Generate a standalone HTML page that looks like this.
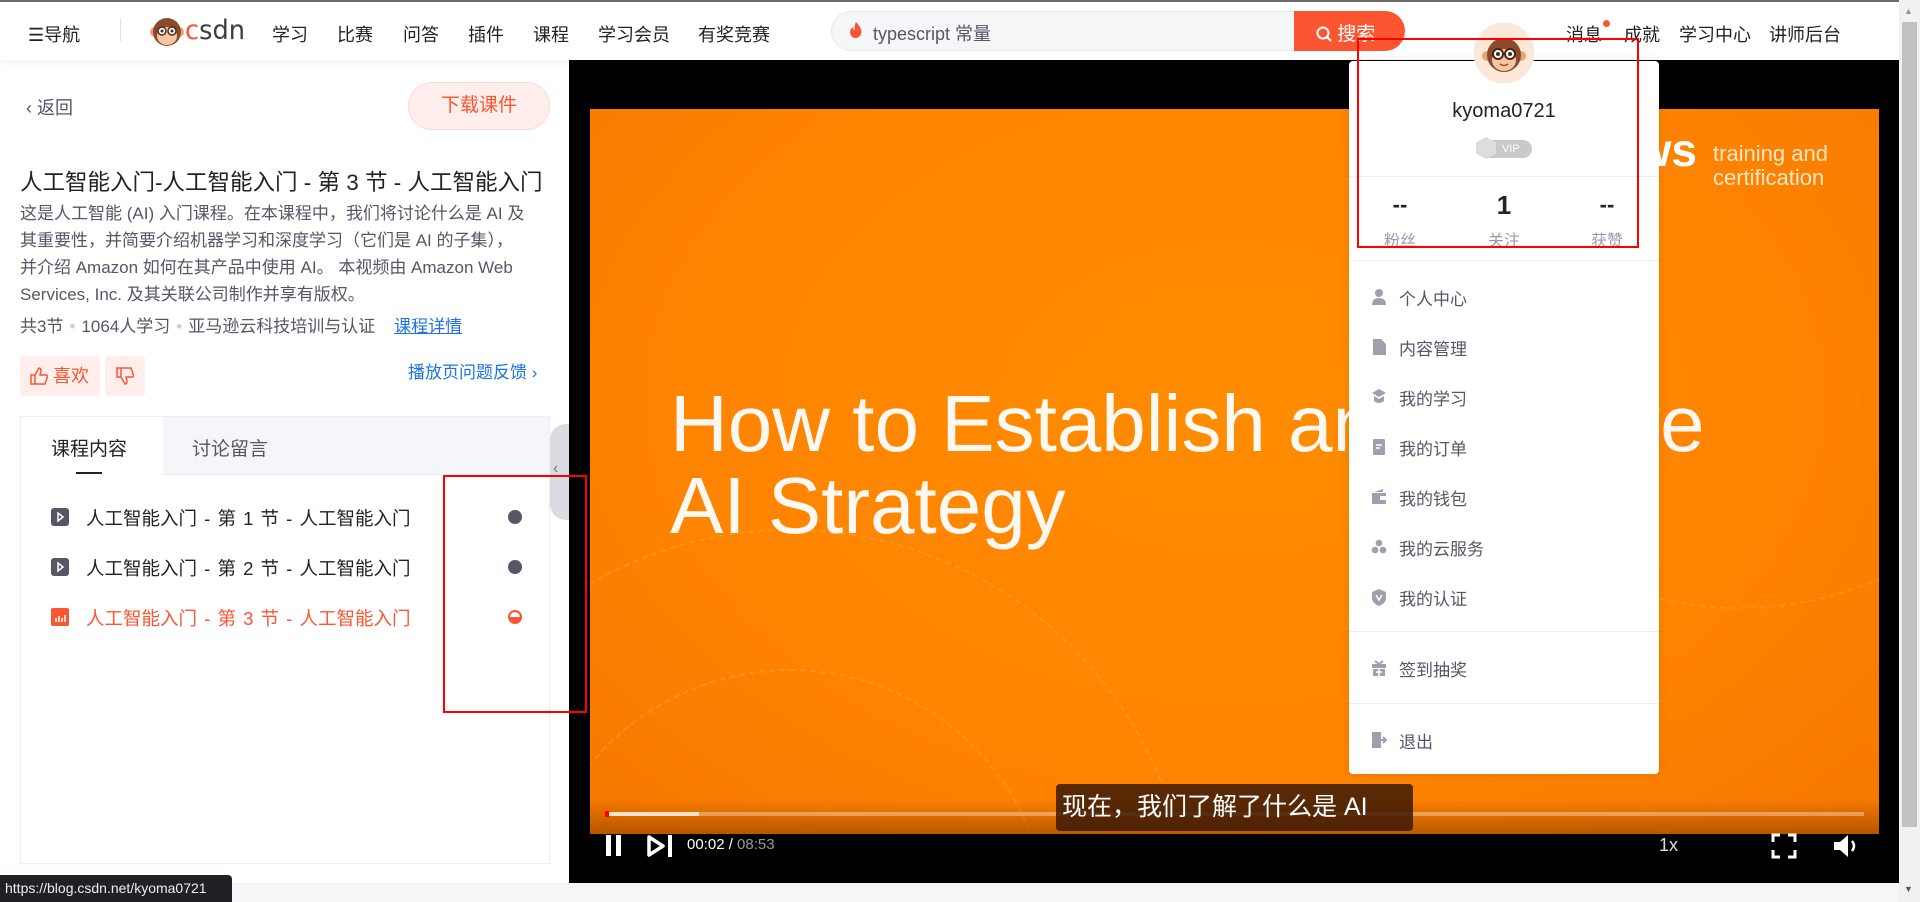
<!DOCTYPE html>
<html><head><meta charset="utf-8"><style>
*{margin:0;padding:0;box-sizing:border-box}
html,body{width:1920px;height:902px;overflow:hidden}
body{background:#fff;font-family:"Liberation Sans","Noto Sans CJK SC",sans-serif;color:#222226;position:relative}
.a{position:absolute;white-space:nowrap}
.hdr{position:absolute;left:0;top:0;width:1899px;height:60px;background:#fff;border-top:2px solid #6b6b6b;box-shadow:0 2px 6px rgba(0,0,0,.06)}
.nav{font-size:18px;color:#222226;top:19px}
.menu{font-size:17px;color:#555666}
.li{font-size:18.5px;word-spacing:2px}
.dot{color:#ccc;margin:0 6px}
</style></head><body>
<div class="hdr">
 <div class="a nav" style="left:28px">☰导航</div>
 <div class="a" style="left:120px;top:16px;width:1px;height:24px;background:#e0e0e0"></div>
 <svg class="a" style="left:150px;top:14px" width="34" height="32" viewBox="0 0 34 32"><circle cx="5" cy="16" r="5" fill="#e6a27a"/><circle cx="29" cy="16" r="5" fill="#e6a27a"/><circle cx="17" cy="16" r="14" fill="#8b4a2b"/><ellipse cx="17" cy="20" rx="10" ry="9" fill="#f4c7a0"/><circle cx="12" cy="15" r="4" fill="#fff" stroke="#5a2d16" stroke-width="1.5"/><circle cx="22" cy="15" r="4" fill="#fff" stroke="#5a2d16" stroke-width="1.5"/><circle cx="12" cy="15" r="1.5" fill="#333"/><circle cx="22" cy="15" r="1.5" fill="#333"/></svg>
 <div class="a" style="left:185px;top:13px;font-size:27px;font-family:'DejaVu Sans',sans-serif;transform:scaleX(.95);transform-origin:left"><span style="color:#fc5531">c</span><span style="color:#3d3d3d">sdn</span></div>
 <div class="a nav" style="left:272px">学习</div>
 <div class="a nav" style="left:337px">比赛</div>
 <div class="a nav" style="left:403px">问答</div>
 <div class="a nav" style="left:468px">插件</div>
 <div class="a nav" style="left:533px">课程</div>
 <div class="a nav" style="left:598px">学习会员</div>
 <div class="a nav" style="left:698px">有奖竞赛</div>
 <div class="a" style="left:831px;top:9px;width:574px;height:40px;border-radius:20px;background:#f5f6f7;border:1px solid #e8e8ed"></div>
 <svg class="a" style="left:850px;top:20px" width="12" height="16"><path d="M6 0q7 7 5 12q-2 4-5 4q-5 0-6-5q0-4 3-6q0 3 2 3q-1-5 1-8z" fill="#fc5531"/></svg>
 <div class="a" style="left:873px;top:18px;font-size:18px;color:#555666">typescript 常量</div>
 <div class="a" style="left:1294px;top:9px;width:111px;height:40px;border-radius:0 20px 20px 0;background:#fc5531;color:#fff;font-size:19px;padding:8px 0 0 22px">
  <svg width="16" height="16" viewBox="0 0 16 16" style="vertical-align:-2px"><circle cx="7" cy="7" r="5.5" fill="none" stroke="#fff" stroke-width="2"/><path d="M11 11l4 4" stroke="#fff" stroke-width="2"/></svg> 搜索</div>
 <div class="a nav" style="left:1566px">消息</div>
 <div class="a" style="left:1603px;top:18px;width:7px;height:7px;border-radius:50%;background:#fc5531"></div>
 <div class="a nav" style="left:1624px">成就</div>
 <div class="a nav" style="left:1679px">学习中心</div>
 <div class="a nav" style="left:1769px">讲师后台</div>
</div>

<div class="a" style="left:26px;top:94px;font-size:18px;color:#555666">‹ 返回</div>
<div class="a" style="left:408px;top:82px;width:142px;height:48px;border-radius:24px;background:#ffeeec;border:1px solid #fcd9d3;color:#fc5531;font-size:19px;text-align:center;line-height:46px">下载课件</div>
<div class="a" style="left:20px;top:165px;font-size:22.5px;color:#222226">人工智能入门-人工智能入门 - 第 3 节 - 人工智能入门</div>
<div class="a" style="left:20px;top:200px;font-size:17px;line-height:27px;color:#555666">这是人工智能 (AI) 入门课程。在本课程中，我们将讨论什么是 AI 及<br>其重要性，并简要介绍机器学习和深度学习（它们是 AI 的子集），<br>并介绍 Amazon 如何在其产品中使用 AI。 本视频由 Amazon Web<br>Services, Inc. 及其关联公司制作并享有版权。</div>
<div class="a" style="left:20px;top:312px;font-size:17px;color:#555666">共3节<span class="dot">•</span>1064人学习<span class="dot">•</span>亚马逊云科技培训与认证 &nbsp;&nbsp; <span style="color:#1a73e8;text-decoration:underline">课程详情</span></div>
<div class="a" style="left:20px;top:356px;width:80px;height:40px;background:#ffeeec;border-radius:3px;color:#fc5531;font-size:18px;line-height:40px;padding-left:10px"><svg width="18" height="18" style="vertical-align:-3px"><path d="M1 8h4v9H1z M5 8l4-7q2 0 2 3l-1 4h6q2 0 1 3l-2 6H5" fill="none" stroke="#fc5531" stroke-width="1.5"/></svg> 喜欢</div>
<div class="a" style="left:105px;top:356px;width:40px;height:40px;background:#ffeeec;border-radius:3px;text-align:center;padding-top:11px"><svg width="18" height="18"><path d="M1 1h4v9H1z M5 10l4 7q2 0 2-3l-1-4h6q2 0 1-3l-2-6H5" fill="none" stroke="#fc5531" stroke-width="1.5"/></svg></div>
<div class="a" style="left:408px;top:358px;font-size:17px;color:#1a73e8">播放页问题反馈 ›</div>

<div class="a" style="left:20px;top:416px;width:530px;height:448px;border:1px solid #eeeef2;background:#fff"></div>
<div class="a" style="left:163px;top:417px;width:386px;height:58px;background:#f5f6fa;border-bottom:1px solid #eee"></div>
<div class="a" style="left:51px;top:434px;font-size:19px;color:#222226">课程内容</div>
<div class="a" style="left:76px;top:472px;width:26px;height:2px;background:#222226"></div>
<div class="a" style="left:192px;top:434px;font-size:19px;color:#555666">讨论留言</div>
<div class="a" style="left:550px;top:424px;width:19px;height:96px;background:#d9dae2;border-radius:16px 0 0 16px"></div>
<div class="a" style="left:553px;top:460px;color:#777;font-size:16px">‹</div>

<div class="a" style="left:51px;top:508px;width:18px;height:18px;border-radius:3px;background:#555666"><svg width="18" height="18"><path d="M7 5l5 4-5 4z" fill="none" stroke="#fff" stroke-width="1.5"/></svg></div>
<div class="a li" style="left:86px;top:505px;color:#222226">人工智能入门 - 第 1 节 - 人工智能入门</div>
<div class="a" style="left:508px;top:510px;width:14px;height:14px;border-radius:50%;background:#555666"></div>
<div class="a" style="left:51px;top:558px;width:18px;height:18px;border-radius:3px;background:#555666"><svg width="18" height="18"><path d="M7 5l5 4-5 4z" fill="none" stroke="#fff" stroke-width="1.5"/></svg></div>
<div class="a li" style="left:86px;top:555px;color:#222226">人工智能入门 - 第 2 节 - 人工智能入门</div>
<div class="a" style="left:508px;top:560px;width:14px;height:14px;border-radius:50%;background:#555666"></div>
<div class="a" style="left:51px;top:608px;width:18px;height:18px;border-radius:2px;background:#fc5531"><svg width="18" height="18"><path d="M5 14v-4M8 14v-6M11 14v-4M14 14v-7" stroke="#fff" stroke-width="1.6"/></svg></div>
<div class="a li" style="left:86px;top:605px;color:#fc5531">人工智能入门 - 第 3 节 - 人工智能入门</div>
<div class="a" style="left:508px;top:610px;width:14px;height:14px;border-radius:50%;border:2px solid #fc5531;background:linear-gradient(#fff 50%,#fc5531 50%)"></div>

<div class="a" style="left:569px;top:60px;width:1330px;height:823px;background:#000"></div>
<div class="a" style="left:590px;top:109px;width:1289px;height:725px;background:radial-gradient(ellipse at 50% 40%,#ff8c00,#ff8400 60%,#f57800);overflow:hidden">
 <div class="a" style="left:-200px;top:420px;width:800px;height:800px;border-radius:50%;border:2px dashed rgba(255,255,255,.12)"></div>
 <div class="a" style="left:-60px;top:560px;width:520px;height:520px;border-radius:50%;border:2px dashed rgba(255,255,255,.12)"></div>
 <div class="a" style="left:800px;top:-200px;width:700px;height:700px;border-radius:50%;border:2px dashed rgba(255,255,255,.1)"></div>
 <div class="a" style="left:80px;top:274px;font-size:80px;color:#fff;line-height:82px;opacity:.95">How to Establish an Effective<br>AI Strategy</div>
 <div class="a" style="left:1020px;top:14px;width:86px;text-align:right;font-size:46px;color:#fff;font-weight:bold">aws</div>
 <div class="a" style="left:1123px;top:33px;font-size:22px;color:#ffe6c8;line-height:24px">training and<br>certification</div>
 <div class="a" style="left:0;top:690px;width:1289px;height:35px;background:linear-gradient(transparent,rgba(120,50,0,.5))"></div>
</div>
<div class="a" style="left:605px;top:812px;width:1259px;height:4px;background:rgba(255,255,255,.35)"></div>
<div class="a" style="left:605px;top:812px;width:94px;height:4px;background:rgba(255,255,255,.7)"></div>
<div class="a" style="left:605px;top:811px;width:4px;height:6px;background:#f00"></div>
<div class="a" style="left:1056px;top:784px;width:357px;height:47px;background:rgba(60,25,5,.85);border-radius:4px;color:#fff;font-size:25px;line-height:47px;padding-left:6px">现在，我们了解了什么是 AI</div>
<svg class="a" style="left:603px;top:834px" width="75" height="24"><rect x="3" y="1" width="5" height="21" fill="#fff"/><rect x="13" y="1" width="5" height="21" fill="#fff"/><path d="M46 3l14 9-14 9z" fill="none" stroke="#fff" stroke-width="3.5" stroke-linejoin="round"/><rect x="65" y="1" width="4" height="22" fill="#fff"/></svg>
<div class="a" style="left:687px;top:836px;font-size:15px;color:#fff">00:02 / <span style="color:#999">08:53</span></div>
<div class="a" style="left:1659px;top:835px;font-size:18px;color:#ddd">1x</div>
<svg class="a" style="left:1771px;top:833px" width="26" height="26"><path d="M2 9V2h7M17 2h7v7M24 17v7h-7M9 24H2v-7" fill="none" stroke="#fff" stroke-width="3"/></svg>
<svg class="a" style="left:1832px;top:833px" width="30" height="26"><path d="M2 9h6l8-7v22l-8-7H2z" fill="#fff"/><path d="M20 8q4 5 0 10" fill="none" stroke="#fff" stroke-width="2.5"/></svg>

<div class="a" style="left:1349px;top:61px;width:310px;height:713px;background:#fff;border-radius:4px;box-shadow:0 0 10px rgba(0,0,0,.1)"></div>
<svg class="a" style="left:1473px;top:22px" width="62" height="62" viewBox="0 0 62 62"><circle cx="31" cy="31" r="30" fill="#fde8d7" stroke="#eee"/><circle cx="14" cy="34" r="5" fill="#e6a27a"/><circle cx="48" cy="34" r="5" fill="#e6a27a"/><circle cx="31" cy="33" r="17" fill="#8b4a2b"/><ellipse cx="31" cy="38" rx="12" ry="11" fill="#f4c7a0"/><circle cx="25" cy="32" r="5" fill="#fff" stroke="#4a2410" stroke-width="2"/><circle cx="37" cy="32" r="5" fill="#fff" stroke="#4a2410" stroke-width="2"/><circle cx="25" cy="32" r="2" fill="#333"/><circle cx="37" cy="32" r="2" fill="#333"/><path d="M27 42q4 3 8 0" stroke="#a0522d" fill="none" stroke-width="1.5"/></svg>
<div class="a" style="left:1349px;top:100px;width:310px;text-align:center;font-size:20px;color:#222226">kyoma0721</div>
<div class="a" style="left:1478px;top:140px;width:54px;height:18px;border-radius:9px;background:#c9c9c9;color:#fff;font-size:11px;line-height:18px;padding-left:24px">VIP</div>
<div class="a" style="left:1476px;top:137px;width:20px;height:22px;background:#ddd;clip-path:polygon(50% 0,100% 25%,100% 75%,50% 100%,0 75%,0 25%)"></div>
<div class="a" style="left:1349px;top:176px;width:310px;height:1px;background:#eee"></div>
<div class="a" style="left:1380px;top:192px;width:40px;text-align:center;font-size:22px;font-weight:bold;color:#222226">--</div>
<div class="a" style="left:1484px;top:190px;width:40px;text-align:center;font-size:26px;font-weight:bold;color:#222226">1</div>
<div class="a" style="left:1587px;top:192px;width:40px;text-align:center;font-size:22px;font-weight:bold;color:#222226">--</div>
<div class="a" style="left:1380px;top:227px;width:40px;text-align:center;font-size:16px;color:#999aaa">粉丝</div>
<div class="a" style="left:1484px;top:227px;width:40px;text-align:center;font-size:16px;color:#999aaa">关注</div>
<div class="a" style="left:1587px;top:227px;width:40px;text-align:center;font-size:16px;color:#999aaa">获赞</div>
<div class="a" style="left:1349px;top:260px;width:310px;height:1px;background:#eee"></div>
<div class="a" style="left:1349px;top:631px;width:310px;height:1px;background:#eee"></div>
<div class="a" style="left:1349px;top:703px;width:310px;height:1px;background:#eee"></div>
<svg class="a" style="left:1371px;top:288px" width="16" height="18"><circle cx="8" cy="5" r="4" fill="#9ea0ae"/><path d="M1 17q0-7 7-7t7 7z" fill="#9ea0ae"/></svg>
<svg class="a" style="left:1371px;top:338px" width="16" height="18"><path d="M2 1h8l5 5v11H2z" fill="#9ea0ae"/></svg>
<svg class="a" style="left:1371px;top:388px" width="16" height="18"><path d="M8 1l7 4-7 4-7-4z M3 8v5q5 4 10 0V8l-5 3z" fill="#9ea0ae"/></svg>
<svg class="a" style="left:1371px;top:438px" width="16" height="18"><rect x="2" y="1" width="12" height="16" rx="1" fill="#9ea0ae"/><path d="M5 7h6M5 10h4" stroke="#fff" stroke-width="1.5"/></svg>
<svg class="a" style="left:1371px;top:488px" width="16" height="18"><path d="M1 5h14v11H1z M3 4l9-3v3" fill="#9ea0ae"/><rect x="9" y="8" width="6" height="4" fill="#fff"/></svg>
<svg class="a" style="left:1371px;top:538px" width="16" height="18"><circle cx="8" cy="5" r="3.3" fill="#9ea0ae"/><circle cx="4" cy="12" r="3.3" fill="#9ea0ae"/><circle cx="12" cy="12" r="3.3" fill="#9ea0ae"/></svg>
<svg class="a" style="left:1371px;top:588px" width="16" height="18"><path d="M8 1l7 3v6q0 5-7 8q-7-3-7-8V4z" fill="#9ea0ae"/><path d="M5 7l3 5 3-5" stroke="#fff" stroke-width="1.5" fill="none"/></svg>
<svg class="a" style="left:1371px;top:659px" width="16" height="18"><rect x="1" y="5" width="14" height="4" fill="#9ea0ae"/><rect x="2" y="10" width="12" height="7" fill="#9ea0ae"/><path d="M8 10v7M5 13h6" stroke="#fff" stroke-width="1.5"/><path d="M4 2l4 3 4-3" stroke="#9ea0ae" stroke-width="2" fill="none"/></svg>
<svg class="a" style="left:1371px;top:731px" width="16" height="18"><path d="M1 1h9v16H1z" fill="#9ea0ae"/><path d="M9 9h6M12 6l3 3-3 3" stroke="#9ea0ae" stroke-width="2" fill="none"/></svg>
<div class="a menu" style="left:1399px;top:285px">个人中心</div>
<div class="a menu" style="left:1399px;top:335px">内容管理</div>
<div class="a menu" style="left:1399px;top:385px">我的学习</div>
<div class="a menu" style="left:1399px;top:435px">我的订单</div>
<div class="a menu" style="left:1399px;top:485px">我的钱包</div>
<div class="a menu" style="left:1399px;top:535px">我的云服务</div>
<div class="a menu" style="left:1399px;top:585px">我的认证</div>
<div class="a menu" style="left:1399px;top:656px">签到抽奖</div>
<div class="a menu" style="left:1399px;top:728px">退出</div>

<div class="a" style="left:1357px;top:38px;width:282px;height:210px;border:2px solid #f00"></div>
<div class="a" style="left:443px;top:475px;width:144px;height:238px;border:2px solid #f00"></div>

<div class="a" style="left:0;top:883px;width:1899px;height:19px;background:#f5f6f7"></div>
<div class="a" style="left:0;top:875px;width:232px;height:27px;background:#202124;border-radius:0 4px 0 0;color:#eee;font-size:14px;line-height:27px;padding-left:5px">https://blog.csdn.net/kyoma0721</div>
<div class="a" style="left:1899px;top:0;width:21px;height:902px;background:#f1f1f1"></div>
<div class="a" style="left:1902px;top:22px;width:15px;height:805px;background:#c1c1c1"></div>
<div class="a" style="left:1904px;top:6px;font-size:9px;color:#999">▲</div>
<div class="a" style="left:1904px;top:884px;font-size:9px;color:#555">▼</div>
</body></html>
